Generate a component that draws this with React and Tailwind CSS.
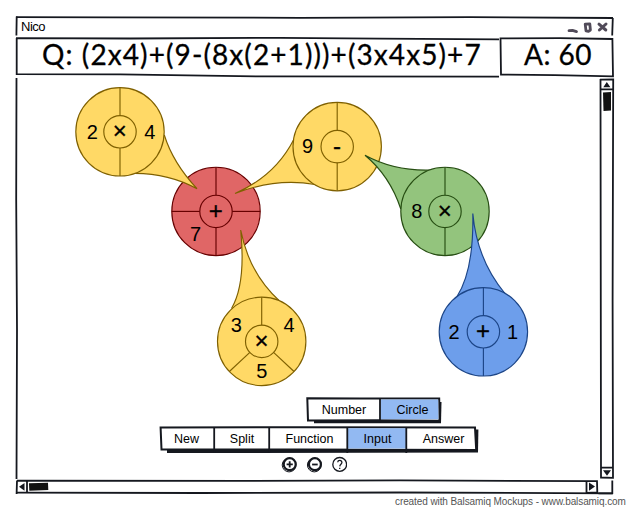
const INK = "#15181f";

// Hand-drawn strokes behind a box; coordinates are window coordinates.
function Sketch({ box, children }) {
  return (
    <svg className="pointer-events-none absolute inset-0 h-full w-full overflow-visible" viewBox={box} fill="none" stroke={INK} strokeWidth="1.8" aria-hidden="true">
      {children}
    </svg>
  );
}

const palette = {
  yellow: ["#ffd966", "#7f6000"],
  red: ["#e06666", "#660000"],
  green: ["#93c47d", "#274e13"],
  blue: ["#6d9eeb", "#1c4587"],
};

const nodes = [
  { color: "red", x: 216, y: 211.4, op: "+", spokes: [0, 90, 180, 270], nums: [["7", 195.5, 241]] },
  { color: "yellow", x: 120, y: 131.8, op: "×", spokes: [0, 180], nums: [["2", 92.3, 138.7], ["4", 149.8, 138.7]], tail: "M164.3 135Q173 163 197 188.7Q169 173.5 135 173.3" },
  { color: "yellow", x: 337.2, y: 146.6, op: "-", spokes: [0, 180], nums: [["9", 307.5, 152.7]], tail: "M293.5 140Q275 176 235 193.5Q276 177.5 315 184.5" },
  { color: "yellow", x: 261.7, y: 341.4, op: "×", spokes: [0, 133, 227], nums: [["3", 236.2, 331.7], ["4", 289, 331.7], ["5", 261.9, 378]], tail: "M231.5 308.5Q246 284 240.7 230Q249 273 279 300.5" },
  { color: "green", x: 445, y: 211.4, op: "×", spokes: [0, 180], nums: [["8", 416.8, 217.9]], tail: "M400.8 209Q390 176 365 155.2Q394 171 430 170" },
  { color: "blue", x: 483.4, y: 331.8, op: "+", spokes: [0, 180], nums: [["2", 454, 338.7], ["1", 512.5, 338.7]], tail: "M457 296.5Q474 270 472.8 213.5Q477 260 505 293.5" },
];

function Node({ n }) {
  const [fill, stroke] = palette[n.color];
  return (
    <g fill={fill} stroke={stroke} strokeWidth="1.15">
      {n.tail && <path d={n.tail} />}
      <circle cx={n.x} cy={n.y} r="44.2" />
      <circle cx={n.x} cy={n.y} r="16.2" />
      {n.spokes.map((a) => (
        <path key={a} d="M0-16.2V-44.2" transform={`translate(${n.x} ${n.y}) rotate(${a})`} />
      ))}
      <g fill="#000" stroke="none" textAnchor="middle" className="font-['Liberation_Sans',sans-serif] text-[20px]">
        {n.nums.map(([t, x, y]) => (
          <text key={t} x={x} y={y}>{t}</text>
        ))}
        <text className="text-[24px]" x={n.x - 0.3} y={n.y + 7.2} stroke="#000" strokeWidth="0.3">{n.op}</text>
      </g>
    </g>
  );
}

function Item({ className, children }) {
  return <div className={"relative flex h-[22px] items-center justify-center pt-[2px] font-['Liberation_Sans',sans-serif] text-[12.5px] leading-none " + className}>{children}</div>;
}

export default function App() {
  return (
    <div className="flex h-[510px] w-[630px] flex-col overflow-hidden bg-white pl-4 pt-4 font-['Lato','Liberation_Sans',sans-serif] text-black">
      <div className="relative flex h-[21px] w-[598px] items-center pl-[5px] text-[13px] leading-none">
        <Sketch box="16 16 598 21">
          <path d="M16 17.2L110 17.4L300 17.8L470 17.2L613 18" />
          <path d="M16.7 16.5L16.4 35.5M612.8 18L612.2 35.5" />
          <g stroke="#514b59" strokeLinecap="round" strokeLinejoin="round">
            <path d="M569 30.6L572.5 30.4L576.5 31.6" strokeWidth="2.8" />
            <path d="M585.2 24.2L589.8 23.8L590.4 30L588.5 31.3L586 30.8Z" strokeWidth="2.8" />
            <path d="M599 24.2L605.8 30M606 24L599.4 30" strokeWidth="3" />
          </g>
        </Sketch>
        <span className="relative font-['Liberation_Sans',sans-serif] tracking-[-0.5px]">Nico</span>
      </div>

      <div className="flex h-[39px] w-[598px]">
        <div className="relative flex w-[484px] items-center pl-[26px] text-[28px] leading-none">
          <Sketch box="16 37 484 39">
            <path d="M16 38.2L130 38.5L280 37.8L380 38.7L499 39.3M16.7 38V75M16 74.2L120 74.4L260 76.4L499 76.6" />
          </Sketch>
          <span className="relative -top-[3px] whitespace-nowrap tracking-[1.09px] [-webkit-text-stroke:0.3px_black]">Q: (2x4)+(9-(8x(2+1)))+(3x4x5)+7</span>
        </div>
        <div className="relative flex w-[114px] items-center pl-[24px] text-[28px] leading-none">
          <Sketch box="500 37 114 39">
            <path d="M500.5 37.5L501 74.5L555 75.2L613 76.3L612.4 39L560 38.2L500.5 38.3" />
          </Sketch>
          <span className="relative -top-[3px] whitespace-nowrap tracking-[0.5px] [-webkit-text-stroke:0.3px_black]">A: 60</span>
        </div>
      </div>

      <div className="flex h-[403px] w-[598px]">
        <div className="relative flex w-[584px] flex-col">
          <Sketch box="16 76 584 403">
            <path d="M16.5 78L16.2 200L17 330L16.5 479" />
          </Sketch>
          <svg className="relative h-[322px] w-[584px] shrink-0" viewBox="16 76 584 322">
            {nodes.map((n, i) => <Node key={i} n={n} />)}
          </svg>
          <div className="relative ml-[291px] flex h-[22px] w-[133px]">
            <Sketch box="307 398 133 22">
              <path d="M314 402H441.5L441 423.3H314Z" fill={INK} stroke="none" />
              <path d="M307.3 398.3L360 398.6L439.2 398.4L439.5 420.7L380 420.3L308 420.6Z" fill="#fff" strokeWidth="2" />
              <path d="M380.5 399.5H438.2L438.4 419.3H380.5Z" fill="#92b9f2" stroke="none" />
              <path d="M380 398V423" />
            </Sketch>
            <Item className="w-[73px] pl-px">Number</Item>
            <Item className="w-[60px] pl-[5px]">Circle</Item>
          </div>
          <div className="relative ml-[145px] mt-[7px] flex h-[22px] w-[315px]">
            <Sketch box="161 427 315 22">
              <path d="M167 431L478.4 429.5L478 452.6L167 453Z" fill={INK} stroke="none" />
              <path d="M160.6 427.6L300 427.2L475 427.6L476.2 450L300 449.4L161.5 449.6Z" fill="#fff" strokeWidth="2" />
              <path d="M347.5 428.3H406.3V448.5H347.5Z" fill="#92b9f2" stroke="none" />
              <path d="M214.2 427V453M269.2 427V453M347.3 427V453M406.3 427V453" />
            </Sketch>
            <Item className="w-[51px]">New</Item>
            <Item className="w-[60px]">Split</Item>
            <Item className="w-[75px]">Function</Item>
            <Item className="w-[61px]">Input</Item>
            <Item className="w-[68px] pl-[3px]">Answer</Item>
          </div>
          <div className="relative ml-[265px] mt-[7px] flex h-[18px] gap-[9px]">
            <svg className="h-[17px] w-4" viewBox="0 0 16 17" fill="none" stroke={INK}>
              <circle cx="8.7" cy="8.2" r="6" strokeWidth="2.2" />
              <circle cx="8.1" cy="9" r="6.9" strokeWidth="1" />
              <path d="M5.6 8.3H11.8M8.7 5.2V11.4" strokeWidth="1.8" />
            </svg>
            <svg className="h-[17px] w-4" viewBox="0 0 16 17" fill="none" stroke={INK}>
              <circle cx="8.9" cy="8.2" r="6" strokeWidth="2.2" />
              <circle cx="8.3" cy="9" r="6.9" strokeWidth="1" />
              <path d="M6.1 8.5H11.7" strokeWidth="1.8" />
            </svg>
            <svg className="h-[17px] w-4" viewBox="0 0 16 17" fill="none" stroke={INK}>
              <circle cx="8.7" cy="8.4" r="6.9" strokeWidth="1.3" />
              <path d="M6.7 6.3C6.9 3.8 11 3.8 10.9 6.5C10.8 8.3 8.9 8.2 8.8 10.4M8.7 11.8V13" strokeWidth="1.3" />
            </svg>
          </div>
        </div>
        <div className="relative w-[14px]">
          <Sketch box="600 76 14 403">
            <path d="M600.5 79L601 477.5L613 477.8L612.6 300L613.2 79.3L600 79.6M600.5 89.3H613M601 467.6H613" />
            <path d="M606.8 82L610.4 87.2H603.3ZM603 470.3H611L607 475.8Z" fill={INK} stroke="none" />
            <path d="M603 92.4L611 92V110.5L603.5 111Z" fill="#111" stroke="none" />
          </Sketch>
        </div>
      </div>

      <div className="relative h-[15px] w-[598px] shrink-0">
        <Sketch box="16 479 598 15">
          <path d="M17 480.6L250 480.9L400 480.3L597 481.2L597.3 492.4L586.5 493M586.5 481V493M27 480.5V493M17 480.5L16.6 494" />
          <path d="M16.5 492.7L200 493L400 492.5L612.5 493.3" />
          <path d="M612.3 480.5V494M598.5 493.3H613" />
          <path d="M19 486.8L24.5 483V490.8ZM595 486.6L589 482.5V490.8Z" fill={INK} stroke="none" />
          <path d="M29 483.2L48 482.7L48.3 490L29.3 490.8Z" fill="#111" stroke="none" />
        </Sketch>
      </div>
      <div className="ml-[379px] mt-[3px] whitespace-nowrap font-['Liberation_Sans',sans-serif] text-[10px] leading-none tracking-[-0.09px] text-[#555]">created with Balsamiq Mockups - www.balsamiq.com</div>
    </div>
  );
}
